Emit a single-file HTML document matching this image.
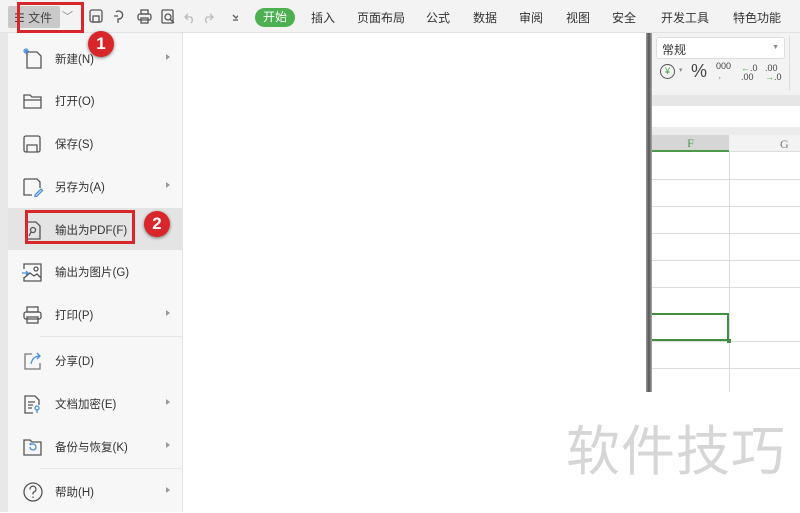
<!DOCTYPE html>
<html><head><meta charset="utf-8"><style>
*{margin:0;padding:0;box-sizing:border-box}
body{width:800px;height:512px;position:relative;overflow:hidden;background:#fff;font-family:"Liberation Sans","Noto Sans CJK SC",sans-serif;color:#333}
.a{position:absolute}
.tb{left:0;top:0;width:800px;height:33px;background:#f3f3f3;border-bottom:1px solid #e2e2e2}
.tab{top:9px;font-size:12px;color:#333}
.mi{left:8px;width:175px;height:43px;font-size:11.5px;color:#333}
.mi span{position:absolute;left:47px;top:14px}
.mi svg{position:absolute;left:14px;top:11px}
.mi b{position:absolute;left:158px;top:17px;width:0;height:0;border-left:4px solid #999;border-top:3.5px solid transparent;border-bottom:3.5px solid transparent}
.hl{left:652px;width:148px;height:1px;background:#dcdcdc}
.badge{width:26px;height:26px;border-radius:50%;background:#d8262b;color:#fff;font-weight:bold;font-size:17px;text-align:center;line-height:26px;box-shadow:0 1px 3px rgba(0,0,0,.5)}
</style></head><body>
<div class="a tb"></div>
<div class="a" style="left:8px;top:6px;width:52px;height:22px;background:#c9c9c9;border-radius:2px"></div>
<div class="a" style="left:14px;top:9px;font-size:12px;color:#444">☰ 文件</div>
<div class="a" style="left:62px;top:8px;font-size:11px;color:#888">﹀</div>
<div class="a" style="left:17px;top:2px;width:67px;height:31px;border:3px solid #d8262b"></div>
<svg class="a" style="left:88px;top:8px" width="150" height="18" fill="none" stroke="#555" stroke-width="1.3">
<rect x="2" y="2" width="12" height="12" rx="2"/><rect x="5" y="8" width="6" height="6"/>
<path d="M28 4a4 4 0 1 1 2 7v4M26 8h4"/>
<rect x="50" y="6" width="13" height="6" rx="2"/><rect x="53" y="2" width="7" height="4"/><rect x="53" y="10" width="7" height="5"/>
<rect x="74" y="2" width="11" height="13" rx="1"/><circle cx="80" cy="9" r="3"/><path d="M82 11l4 4"/>
<path d="M100 6l-3 3 3 3M97 9h6a4 4 0 0 1 0 6" stroke="#bbb"/><path d="M122 6l3 3-3 3M125 9h-6a4 4 0 0 0 0 6" stroke="#bbb"/>
<path d="M145 7l3 3 3-3M145 12h6" /></svg>
<div class="a" style="left:255px;top:8px;width:40px;height:19px;border-radius:10px;background:#4caf50;color:#fff;font-size:12px;text-align:center;line-height:19px">开始</div>
<div class="a tab" style="left:311px">插入</div>
<div class="a tab" style="left:357px">页面布局</div>
<div class="a tab" style="left:426px">公式</div>
<div class="a tab" style="left:473px">数据</div>
<div class="a tab" style="left:519px">审阅</div>
<div class="a tab" style="left:566px">视图</div>
<div class="a tab" style="left:612px">安全</div>
<div class="a tab" style="left:661px">开发工具</div>
<div class="a tab" style="left:733px">特色功能</div>

<div class="a" style="left:652px;top:33px;width:148px;height:62px;background:#f3f3f3"></div>
<div class="a" style="left:789px;top:36px;width:1px;height:55px;background:#ddd"></div>
<div class="a" style="left:656px;top:37px;width:129px;height:22px;background:#fff;border:1px solid #ddd;border-radius:3px;font-size:12px;padding:3px 5px">常规<span style="float:right;font-size:7px;color:#888;margin-top:3px">▼</span></div>
<div class="a" style="left:660px;top:64px;width:15px;height:15px;border:1.3px solid #555;border-radius:50%;font-size:9px;text-align:center;line-height:13px;color:#4a4">¥</div>
<div class="a" style="left:679px;top:66px;font-size:7px;color:#888">▾</div>
<div class="a" style="left:691px;top:61px;font-size:18px;color:#444">%</div>
<div class="a" style="left:716px;top:62px;font-size:9px;line-height:9px;color:#444">000<br><span style="color:#4a4">&nbsp;,</span></div>
<div class="a" style="left:741px;top:64px;font-size:9px;line-height:9px;color:#444"><span style="color:#4a4">←</span>.0<br>.00</div>
<div class="a" style="left:765px;top:64px;font-size:9px;line-height:9px;color:#444">.00<br><span style="color:#4a4">→</span>.0</div>
<div class="a" style="left:652px;top:95px;width:148px;height:11px;background:#e6e6e6"></div>
<div class="a" style="left:652px;top:127px;width:148px;height:8px;background:#ececec"></div>
<div class="a" style="left:652px;top:135px;width:148px;height:17px;background:#f3f3f3;border-bottom:1px solid #ddd"></div>
<div class="a" style="left:652px;top:135px;width:77px;height:17px;background:#d6d6d6;border-bottom:2px solid #4a9a4a;font-family:'Liberation Serif',serif;font-size:12px;color:#4a9a4a;text-align:center;line-height:16px">F</div>
<div class="a" style="left:780px;top:137px;font-family:'Liberation Serif',serif;font-size:12px;color:#777">G</div>
<div class="a hl" style="top:179px"></div><div class="a hl" style="top:206px"></div><div class="a hl" style="top:233px"></div><div class="a hl" style="top:260px"></div><div class="a hl" style="top:287px"></div><div class="a hl" style="top:341px"></div><div class="a hl" style="top:368px"></div>
<div class="a" style="left:729px;top:152px;width:1px;height:240px;background:#dcdcdc"></div>
<div class="a" style="left:652px;top:313px;width:77px;height:28px;border:2px solid #3f8f3f;border-left:none"></div>
<div class="a" style="left:727px;top:339px;width:4px;height:4px;background:#3f8f3f"></div>

<div class="a" style="left:646px;top:33px;width:6px;height:359px;background:linear-gradient(90deg,#999,#555,#aaa)"></div>
<div class="a" style="left:0;top:33px;width:8px;height:479px;background:#e8e8e8"></div>

<div class="a" style="left:8px;top:33px;width:175px;height:479px;background:#f7f7f7;border-right:1px solid #e4e4e4"></div>
<div class="a" style="left:8px;top:208px;width:175px;height:42px;background:#e4e4e4"></div>
<div class="a" style="left:40px;top:336px;width:143px;height:1px;background:#e6e6e6"></div>
<div class="a" style="left:40px;top:468px;width:143px;height:1px;background:#e6e6e6"></div>

<div class="a mi" style="top:37px"><svg width="22" height="22" fill="none" stroke="#555" stroke-width="1.3"><path d="M5 4h10l4 4v12H5z"/><path d="M2 1l4 4M6 1l-4 4M4 0v6M1 3h6" stroke="#4a90d9" stroke-width="1"/></svg><span>新建(N)</span><b></b></div>
<div class="a mi" style="top:79px"><svg width="22" height="22" fill="none" stroke="#555" stroke-width="1.3"><path d="M2 5h6l2 2h9v11H2z M2 10h17"/></svg><span>打开(O)</span></div>
<div class="a mi" style="top:122px"><svg width="22" height="22" fill="none" stroke="#555" stroke-width="1.3"><rect x="2" y="3" width="16" height="16" rx="2"/><path d="M5 19v-7h10v7"/></svg><span>保存(S)</span></div>
<div class="a mi" style="top:165px"><svg width="22" height="22" fill="none" stroke="#555" stroke-width="1.3"><path d="M2 3h13l3 3v6M2 3v16h8"/><path d="M13 19l6-6 1.5 1.5-6 6H13z" stroke="#4a90d9"/></svg><span>另存为(A)</span><b></b></div>
<div class="a mi" style="top:208px"><svg width="22" height="22" fill="none" stroke="#555" stroke-width="1.3"><path d="M4 3h10l4 4v13H4z"/><circle cx="11" cy="11" r="2.5"/><path d="M9 13l-2 4"/></svg><span>输出为PDF(F)</span></div>
<div class="a mi" style="top:250px"><svg width="22" height="22" fill="none" stroke="#555" stroke-width="1.3"><path d="M2 8V3h17v17H2v-4M2 17l6-5 4 3 3-2 4 4"/><circle cx="14" cy="8" r="2"/><path d="M0 12h6M4 10l2 2-2 2" stroke="#4a90d9"/></svg><span>输出为图片(G)</span></div>
<div class="a mi" style="top:293px"><svg width="22" height="22" fill="none" stroke="#555" stroke-width="1.3"><rect x="2" y="8" width="17" height="7" rx="2"/><rect x="5" y="3" width="11" height="5"/><rect x="5" y="13" width="11" height="6"/></svg><span>打印(P)</span><b></b></div>
<div class="a mi" style="top:339px"><svg width="22" height="22" fill="none" stroke="#777" stroke-width="1.3"><path d="M10 4H3v15h15v-6"/><path d="M9 14c1-5 4-8 9-8M15 3l3 3-3 3" stroke="#4a90d9"/></svg><span>分享(D)</span></div>
<div class="a mi" style="top:382px"><svg width="22" height="22" fill="none" stroke="#555" stroke-width="1.3"><path d="M11 20H3V3h10l4 4v5"/><path d="M6 9h7M6 12h5M6 15h4"/><circle cx="15" cy="15" r="2" stroke="#4a90d9"/><path d="M15 17v3" stroke="#4a90d9"/></svg><span>文档加密(E)</span><b></b></div>
<div class="a mi" style="top:425px"><svg width="22" height="22" fill="none" stroke="#555" stroke-width="1.3"><path d="M2 4h6l2 2h9v13H2z"/><path d="M8 11a3 3 0 1 0 3-3h-2M9 7l-1 1 1 1" stroke="#4a90d9"/></svg><span>备份与恢复(K)</span><b></b></div>
<div class="a mi" style="top:470px"><svg width="22" height="22" fill="none" stroke="#555" stroke-width="1.3"><circle cx="11" cy="11" r="9"/><path d="M8 8.5a3 3 0 1 1 4 2.5c-1 .5-1 1-1 2.5M11 15.5v1.5"/></svg><span>帮助(H)</span><b></b></div>

<div class="a" style="left:25px;top:210px;width:110px;height:34px;border:3px solid #d8262b"></div>
<div class="a badge" style="left:88px;top:31px">1</div>
<div class="a badge" style="left:144px;top:211px">2</div>

<div class="a" style="left:566px;top:412px;font-size:54px;line-height:70px;color:#d6d6d6;letter-spacing:1px;font-family:'Noto Sans CJK SC',sans-serif;font-weight:400">软件技巧</div>
</body></html>
